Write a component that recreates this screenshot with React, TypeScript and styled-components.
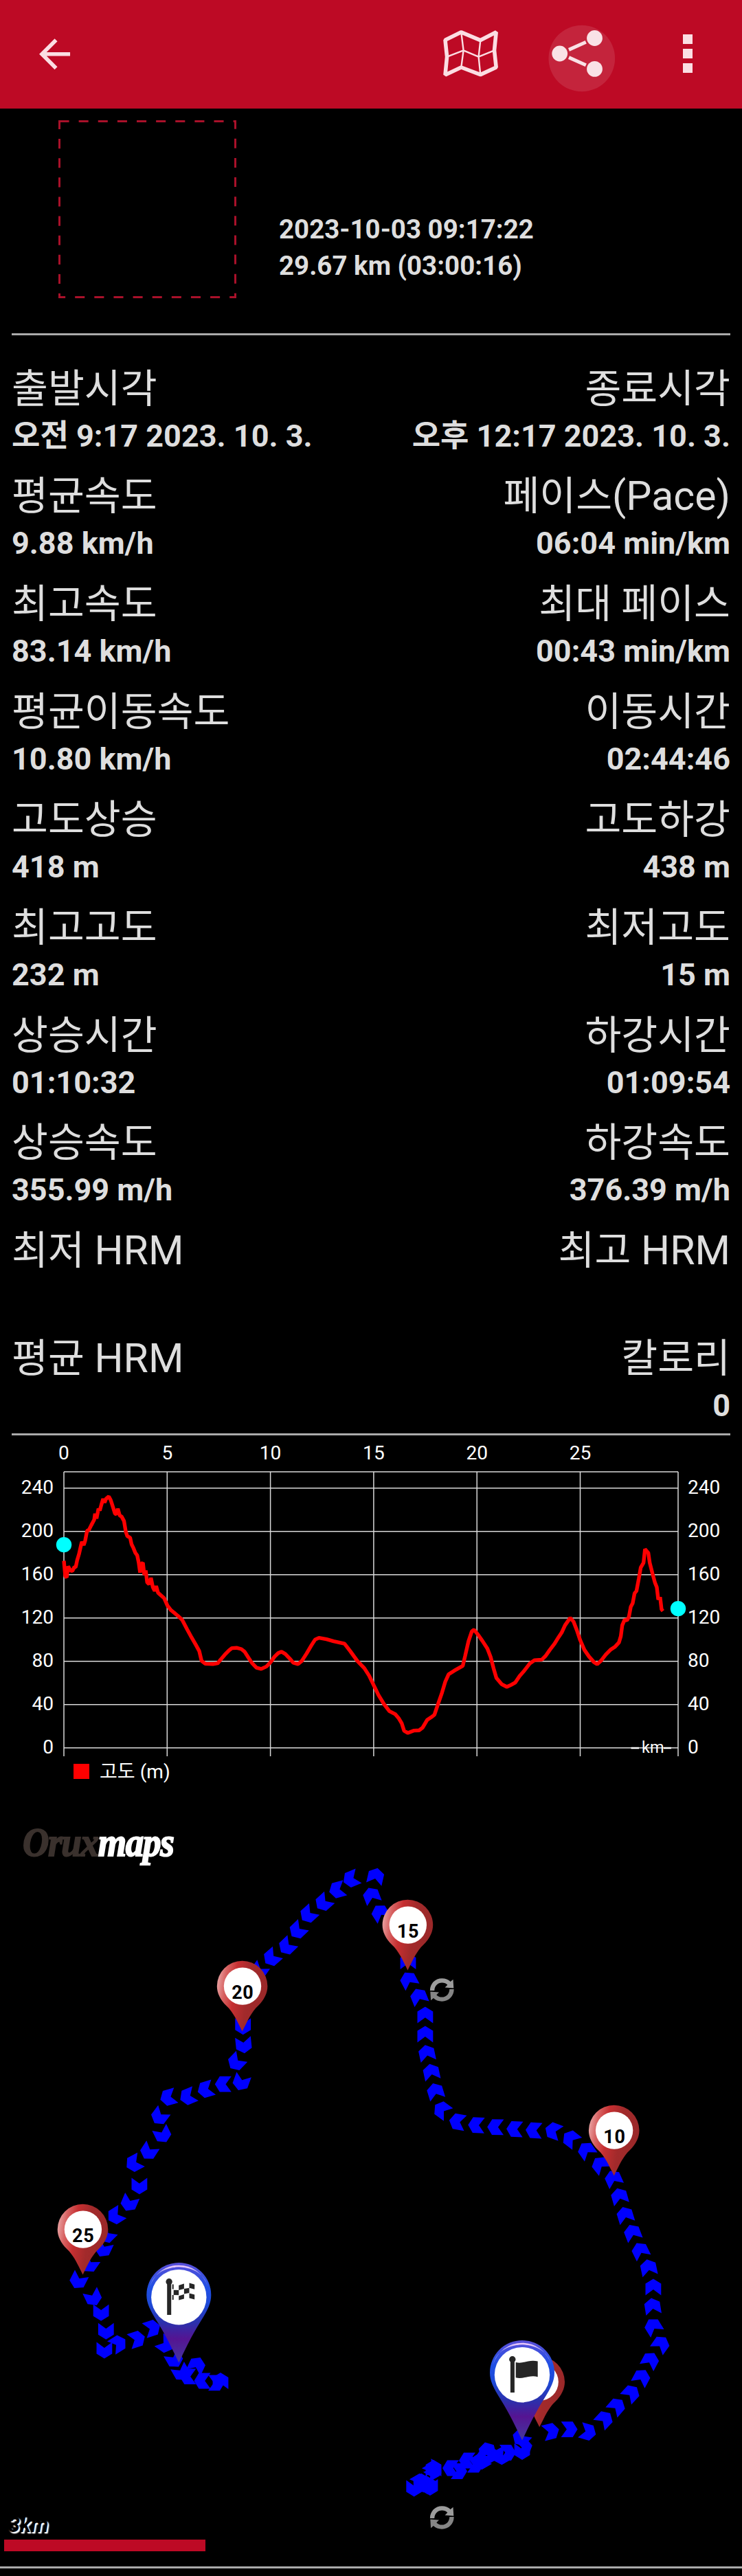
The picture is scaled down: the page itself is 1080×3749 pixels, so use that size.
import React from "react";
import styled, { createGlobalStyle } from "styled-components";

const GlobalStyle = createGlobalStyle`
  html, body { margin: 0; padding: 0; background: #000; }
  * { box-sizing: border-box; }
`;

const CRIMSON = "#bd0a25";
const ICON = "#fbdee3";
const FONT = `Roboto, "Noto Sans CJK KR", sans-serif`;

const Page = styled.main`
  display: flex;
  flex-direction: column;
  width: 1080px;
  height: 3749px;
  overflow: hidden;
  background: #000;
  color: #dedede;
  font-family: ${FONT};
`;

const Toolbar = styled.header`
  display: flex;
  align-items: center;
  flex: none;
  height: 158px;
  padding: 0 71px 0 46px;
  background: ${CRIMSON};
`;

const Action = styled.button<{ $w: number; $gap?: number; $push?: boolean }>`
  flex: none;
  width: ${(p) => p.$w}px;
  height: 158px;
  margin: 0 0 0 ${(p) => (p.$push ? "auto" : `${p.$gap ?? 0}px`)};
  padding: 0;
  border: 0;
  background: none;
  svg {
    display: block;
  }
`;

const Divider = styled.hr<{ $full?: boolean }>`
  flex: none;
  height: 3px;
  margin: 0 ${(p) => (p.$full ? 0 : 17)}px;
  border: 0;
  background: #aaaaaa;
`;

const Summary = styled.section`
  display: flex;
  align-items: flex-end;
  flex: none;
  height: 327px;
  padding: 0 85px 51px;
`;

const SummaryText = styled.div`
  display: flex;
  flex-direction: column;
  margin-left: 61px;
  padding-bottom: 21px;
  font-size: 38.5px;
  font-weight: 700;
  line-height: 53px;
  white-space: nowrap;
`;

const Stats = styled.section`
  display: grid;
  grid-auto-rows: 156.85px;
  flex: none;
  height: 1598px;
  padding: 38.5px 17px 0;
`;

const StatRow = styled.div`
  display: flex;
  justify-content: space-between;
`;

const Stat = styled.div<{ $end?: boolean }>`
  display: flex;
  flex-direction: column;
  align-items: ${(p) => (p.$end ? "flex-end" : "flex-start")};
  white-space: nowrap;
`;

const StatLabel = styled.span`
  height: 80px;
  font-size: 57.5px;
  line-height: 80px;
`;

const Latin = styled.span`
  font-size: 59px;
  line-height: 1;
`;

const StatValue = styled.span`
  height: 56px;
  font-size: 45px;
  font-weight: 700;
  line-height: 56px;
`;

const ChartPanel = styled.section`
  flex: none;
  height: 536px;
  svg {
    display: block;
  }
  text {
    font-family: ${FONT};
    font-size: 28.1px;
    fill: #fff;
  }
`;

const MapPanel = styled.section`
  position: relative;
  flex: none;
  height: 1110px;
  svg {
    display: block;
  }
`;

const Logo = styled.div`
  position: absolute;
  left: 33px;
  top: 26px;
  font-family: "Liberation Serif", serif;
  font-size: 60px;
  font-style: italic;
  font-weight: 700;
  line-height: 60px;
  letter-spacing: -1.5px;
  color: #3a312d;
  -webkit-text-stroke: 2px #3a312d;
  transform: scaleX(0.885);
  transform-origin: left;
  white-space: nowrap;
  b {
    color: #fff;
    -webkit-text-stroke: 2px #fff;
  }
`;

const Scale = styled.div`
  position: absolute;
  left: 6px;
  top: 1030px;
  display: flex;
  flex-direction: column;
  gap: 1px;
`;

const ScaleText = styled.span`
  padding-left: 6px;
  font-size: 30.5px;
  font-style: italic;
  font-weight: 700;
  line-height: 40px;
  color: #000;
  text-shadow: 2px 2px 2px #fff, 2px 2px 1px #ddd;
`;

const ScaleBar = styled.span`
  width: 293px;
  height: 17px;
  background: ${CRIMSON};
`;

const STATS: [string, string, string, string][] = [
  ["출발시각", "오전 9:17 2023. 10. 3.", "종료시각", "오후 12:17 2023. 10. 3."],
  ["평균속도", "9.88 km/h", "페이스(Pace)", "06:04 min/km"],
  ["최고속도", "83.14 km/h", "최대 페이스", "00:43 min/km"],
  ["평균이동속도", "10.80 km/h", "이동시간", "02:44:46"],
  ["고도상승", "418 m", "고도하강", "438 m"],
  ["최고고도", "232 m", "최저고도", "15 m"],
  ["상승시간", "01:10:32", "하강시간", "01:09:54"],
  ["상승속도", "355.99 m/h", "하강속도", "376.39 m/h"],
  ["최저 HRM", "", "최고 HRM", ""],
  ["평균 HRM", "", "칼로리", "0"],
];

/* Latin parts of a label are set slightly larger than the Hangul. */
function Label({ text }: { text: string }) {
  const at = text.search(/ ?[(A-Z]/);
  if (at < 0) return <StatLabel>{text}</StatLabel>;
  return (
    <StatLabel>
      {text.slice(0, at)}
      <Latin>{text.slice(at)}</Latin>
    </StatLabel>
  );
}

const PROFILE =
  "135,592 138,655 141,660 144,615 149,632 153,634 157,618 160,618 163,590 167,565 171,530 173,515 177,528 180,510 184,470 188,466 193,447 199,425 201,400 204,420 206,400 208,380 211,387 214,365 218,340 221,355 224,340 230,330 234,345 239,375 243,400 246,402 249,380 253,408 257,412 262,430 266,475 269,492 275,498 278,525 282,540 286,560 290,570 293,598 296,640 299,605 302,600 305,650 308,632 311,680 315,688 319,662 323,700 327,715 330,695 334,722 340,733 347,745 354,775 361,793 370,807 378,820 385,833 395,870 405,905 414,935 421,960 426,1000 434,1012 450,1013 460,1010 466,995 475,975 484,957 490,948 500,947 510,952 517,963 525,987 533,1010 542,1028 552,1033 563,1023 572,1005 580,983 588,968 595,963 603,972 612,990 620,1008 630,1013 638,1000 648,970 658,937 666,913 674,906 690,912 705,920 728,930 740,960 755,1000 770,1030 780,1060 790,1100 800,1140 812,1178 823,1205 835,1217 843,1235 849,1255 854,1285 862,1294 875,1284 886,1283 893,1272 903,1240 911,1230 918,1220 925,1180 934,1130 941,1085 948,1055 960,1040 978,1020 983,980 990,920 997,880 1002,873 1010,893 1020,920 1030,950 1037,985 1043,1030 1049,1070 1060,1095 1071,1106 1080,1098 1089,1088 1098,1062 1108,1040 1120,1010 1130,997 1145,995 1153,980 1162,955 1172,930 1180,905 1187,885 1194,855 1205,825 1212,840 1219,875 1226,915 1235,955 1245,983 1255,1005 1262,1014 1270,1000 1280,975 1290,955 1300,942 1308,925 1312,900 1315,855 1320,832 1325,835 1329,820 1333,780 1337,765 1341,725 1345,715 1350,665 1354,620 1360,600 1363,545 1370,560 1373,600 1379,645 1384,680 1388,700 1391,750 1395,740 1398,790 1401,797";

const toX = (v: number) => v / 1.4519;
const toY = (v: number) => v / 2.8 - 29;
const profilePoints = PROFILE.split(" ")
  .map((p) => p.split(",").map(Number))
  .map(([x, y]) => `${toX(x).toFixed(1)},${toY(y).toFixed(1)}`)
  .join(" ");

function Chart() {
  const xs = [0, 5, 10, 15, 20, 25];
  const ys = [240, 200, 160, 120, 80, 40, 0];
  const gx = (km: number) => 93 + km * 30.06;
  const gy = (m: number) => 454.7 - m * 1.575;
  return (
    <ChartPanel>
      <svg width="1080" height="536" viewBox="0 0 1080 536">
        <g stroke="#fff" strokeWidth="1.5" opacity="0.85">
          {xs.map((k) => (
            <line key={k} x1={gx(k)} x2={gx(k)} y1="53" y2="467" />
          ))}
          <line x1="987" x2="987" y1="53" y2="467" />
          <line x1="93" x2="987" y1="53" y2="53" />
          {ys.map((m) => (
            <line key={m} x1="93" x2="987" y1={gy(m)} y2={gy(m)} />
          ))}
        </g>
        {xs.map((k) => (
          <text key={k} x={gx(k)} y="35" textAnchor="middle">
            {k}
          </text>
        ))}
        {ys.map((m) => (
          <React.Fragment key={m}>
            <text x="78" y={gy(m) + 8.3} textAnchor="end">
              {m}
            </text>
            <text x="1001" y={gy(m) + 8.3}>
              {m}
            </text>
          </React.Fragment>
        ))}
        <path d="M918.5,455 H930 M966,455 H977" stroke="#fff" strokeWidth="2.4" />
        <text x="934" y="462" style={{ fontSize: 23.5 }}>
          km
        </text>
        <polyline points={profilePoints} fill="none" stroke="#f00" strokeWidth="5.4" strokeLinejoin="bevel" />
        <circle cx="93" cy="159.2" r="11.2" fill="#0ff" />
        <circle cx="987" cy="252.2" r="11.2" fill="#0ff" />
        <rect x="107" y="478" width="23" height="22" fill="#f00" />
        <text x="145" y="499">
          고도 (m)
        </text>
      </svg>
    </ChartPanel>
  );
}

/* Direction arrows along the track: x, y, heading in degrees. */
const ARROWS: [number, number, number][] = [
  [511, 2734.6, 247], [490.8, 2750.4, 255], [470.8, 2769.3, 228], [448.7, 2786.4, 228], [433.2, 2809.6, 226],
  [417.7, 2832.8, 226], [395.4, 2849.3, 229], [376.8, 2868.6, 215], [353.7, 2949.3, 180], [354.7, 2976.4, 174],
  [343.7, 3001.4, 224], [351, 3030.7, 200], [324.8, 3033.2, 270], [299.3, 3041, 253], [273.4, 3051.4, 247],
  [244.9, 3052.5, 254], [232.1, 3080.3, 217], [236.9, 3106.8, 154], [216.3, 3131.4, 213], [194.9, 3148.5, 242],
  [202.9, 3181.4, 180], [188, 3206.5, 203], [168.1, 3225, 238], [155, 3252.6, 225], [150.2, 3273, 205],
  [130, 3295.4, 215], [113.7, 3319.4, 207], [135.7, 3344, 155], [147.1, 3365.8, 180], [154.3, 3392.7, 180],
  [151.9, 3420.6, 180], [172.2, 3410.8, 58], [199.4, 3404.3, 72], [221.5, 3388.3, 72], [241, 3412, 125],
  [254, 3434, 150], [264, 3453, 150], [273.4, 3458.7, 270], [286.5, 3442, 25], [294.5, 3465, 270],
  [321, 3465, 0], [315, 3467.8, 90],
  [546.9, 2730.4, 13], [540.7, 2758.6, 339], [553, 2783.6, 328], [594.8, 2881.4, 332], [594, 2853.9, 0],
  [609.6, 2905.7, 338], [618.9, 2932.5, 0], [618.9, 2960.4, 0], [621.3, 2987.9, 348], [627.8, 3015.4, 348],
  [633.7, 3043.6, 343], [643, 3070.4, 306], [665.7, 3087.9, 280], [693.3, 3092.9, 272], [721.2, 3095.7, 271],
  [749.1, 3098.6, 272], [777, 3100.4, 273], [805.2, 3101, 290], [830.7, 3112.5, 308], [853.4, 3129.3, 325],
  [873.5, 3150.4, 322], [892.7, 3170.5, 336], [901.6, 3196.3, 344], [909.9, 3223.5, 343], [920.6, 3249.3, 339],
  [931.9, 3275.4, 334], [944, 3300.1, 348], [950.9, 3328.4, 0], [949.8, 3356.4, 351], [950.5, 3385.8, 328],
  [962.2, 3411.5, 35], [946.7, 3435.1, 28], [934, 3459.8, 28], [918.8, 3483, 43], [897.8, 3501.9, 41],
  [879.9, 3520.8, 43], [855.8, 3539.6, 106], [828.6, 3535.6, 90], [802, 3538.5, 76],
  [758, 3548, 225], [763, 3561, 80], [760, 3568, 180], [739, 3569.5, 90], [729, 3575, 240],
  [709, 3566, 345], [705, 3577, 215], [713, 3572, 60], [680, 3581, 270], [692, 3587, 90], [700, 3582, 240],
  [656, 3592, 270], [668, 3596.5, 90], [631, 3592, 0], [630, 3596, 60], [632, 3594, 120],
  [612, 3612, 300], [612, 3612, 60], [626, 3620, 180], [624, 3618, 120], [602.7, 3621.5, 180],
];

const RED_PIN =
  "M0,65.8 C-8,50 -13,38 -23,28.7 C-32,20 -36.8,10 -36.8,0 A36.8,36.8 0 0 1 36.8,0 C36.8,10 32,20 23,28.7 C13,38 8,50 0,65.8Z";
const BLUE_PIN =
  "M0,98.6 C-8,82 -17,62 -32,38 C-42,22 -47,12 -47,0 A47,47 0 0 1 47,0 C47,12 42,22 32,38 C17,62 8,82 0,98.6Z";

function RedPin({ x, y, label }: { x: number; y: number; label?: string }) {
  return (
    <g transform={`translate(${x},${y})`}>
      <path d={RED_PIN} fill="url(#redPin)" />
      <circle cx="0.4" cy="0" r="27.2" fill="#fff" />
      {label && (
        <text x="0.7" y="18" textAnchor="middle" fontFamily="Roboto, sans-serif" fontSize="27" fontWeight="700" letterSpacing="0.6">
          {label}
        </text>
      )}
    </g>
  );
}

function BluePin({ x, y, children }: { x: number; y: number; children: React.ReactNode }) {
  return (
    <g transform={`translate(${x},${y})`}>
      <path d={BLUE_PIN} fill="url(#bluePin)" />
      <path d="M-42,-12 A43.8,43.8 0 0 1 42,-12 C34,-50 -34,-50 -42,-12Z" fill="url(#pinShine)" />
      <circle cy="1" r="41.5" fill="url(#bluePin)" />
      <circle cy="3.2" r="40.2" fill="#fff" />
      <g fill="#262626">
        <circle cx="-14.2" cy="-19.3" r="4.7" />
        <rect x="-17.1" y="-18" width="6" height="47" />
        {children}
      </g>
    </g>
  );
}

function Sync({ x, y }: { x: number; y: number }) {
  const half = "M-17.4,1 C-17.4,-9 -10,-16.7 0,-16.7 C5,-16.7 9.5,-14.8 12.4,-12 L16.2,-15.3 L17,-2.4 L4.3,-3.6 L8,-7.2 C6,-9.6 3.4,-10.6 0,-10.6 C-6,-10.6 -10.8,-6 -11,1Z";
  return (
    <g transform={`translate(${x},${y})`}>
      <path d={half} fill="#9c9c9c" />
      <path d={half} fill="#858585" transform="rotate(180)" />
    </g>
  );
}

function TrackMap() {
  return (
    <MapPanel>
      <svg width="1080" height="1110" viewBox="0 2625 1080 1110">
        <defs>
          <linearGradient id="redPin" x1="0" y1="0.25" x2="1" y2="0.45">
            <stop offset="0" stopColor="#eaa6a6" />
            <stop offset="0.16" stopColor="#d86464" />
            <stop offset="0.36" stopColor="#c62f31" />
            <stop offset="0.62" stopColor="#a22a2b" />
            <stop offset="1" stopColor="#9a2829" />
          </linearGradient>
          <linearGradient id="bluePin" gradientUnits="userSpaceOnUse" x1="0" y1="-47" x2="0" y2="99">
            <stop offset="0" stopColor="#5a4fd8" />
            <stop offset="0.25" stopColor="#1f4fe4" />
            <stop offset="0.42" stopColor="#1d49d6" />
            <stop offset="0.6" stopColor="#2b30ac" />
            <stop offset="0.76" stopColor="#551492" />
            <stop offset="1" stopColor="#43399f" />
          </linearGradient>
          <linearGradient id="pinShine" gradientUnits="userSpaceOnUse" x1="0" y1="-45" x2="0" y2="-14">
            <stop offset="0" stopColor="#f6cdfb" />
            <stop offset="1" stopColor="#5f86ef" />
          </linearGradient>
        </defs>
        <g fill="#00f">
          {ARROWS.map(([x, y, a], i) => (
            <path
              key={i}
              d="M0,-12 L11.4,-5 L11.4,12 L0,3.7 L-11.4,12 L-11.4,-5Z"
              transform={`translate(${x},${y}) rotate(${a})`}
            />
          ))}
        </g>
        <RedPin x={593.4} y={2801.6} label="15" />
        <RedPin x={352.6} y={2890.6} label="20" />
        <RedPin x={893.7} y={3100.6} label="10" />
        <RedPin x={120.5} y={3244.6} label="25" />
        <RedPin x={785.2} y={3466.5} />
        <BluePin x={260.3} y={3340}>
          <path d="M-9.6,-15.5h2v7h-2z M-9.6,0h2v7h-2z M-7.6,-7.2L-0.1,-6.9V0.3L-7.6,0z M-0.1,-14L7.6,-16.4V-9L-0.1,-6.9z M-0.1,1.4L7.6,-1V5.6L-0.1,7.6z M7.6,-9L15.2,-10.3V-3L7.6,-1.5z M15.2,-17.6L22.9,-15.3V-8.2L15.2,-10.3z M15.2,-2.6L22.9,-0.6V6.6L15.2,4.6z" />
        </BluePin>
        <BluePin x={760} y={3453}>
          <path d="M-9.3,-15 C2,-12 10,-20 22.7,-16.4 V6.3 C12,2.5 2,10 -9.3,7.3Z" />
        </BluePin>
        <Sync x={643.3} y={2896} />
        <Sync x={643.3} y={3664} />
      </svg>
      <Logo>
        Orux<b>maps</b>
      </Logo>
      <Scale>
        <ScaleText>3km</ScaleText>
        <ScaleBar />
      </Scale>
    </MapPanel>
  );
}

export default function App() {
  return (
    <Page>
      <GlobalStyle />
      <Toolbar>
        <Action $w={68} aria-label="Back">
          <svg width="68" height="158" viewBox="0 0 68 158">
            <path
              transform="translate(-0.2,45) scale(2.8125)"
              d="M20 11H7.83l5.59-5.59L12 4l-8 8 8 8 1.41-1.41L7.83 13H20v-2z"
              fill={ICON}
            />
          </svg>
        </Action>
        <Action $w={80} $push aria-label="Map">
          <svg width="80" height="158" viewBox="645 0 80 158" fill="none" stroke={ICON} strokeLinejoin="bevel">
            <path
              strokeWidth="5.6"
              d="M648,58.2 L671.3,46.8 L699.3,58.6 L722.2,46.8 L719.5,73.3 L722.2,98 L699.3,108.6 L671.3,98 L648,109 L650.6,82.6Z"
            />
            <path strokeWidth="2.4" d="M671.3,46.8 L674.6,73.3 L671.3,98 M699.3,58.6 L696.6,82.6 L699.3,108.6 M650.6,82.6 L674.6,73.3 L696.6,82.6 L719.5,73.3" />
          </svg>
        </Action>
        <Action $w={98} $gap={73} aria-label="Share">
          <svg width="98" height="158" viewBox="798 0 98 158" fill="#f9e2e6">
            <circle cx="846.8" cy="85" r="48.3" fill="#fff" fillOpacity="0.11" />
            <circle cx="814.7" cy="78" r="11.4" />
            <circle cx="865.5" cy="55.5" r="11.4" />
            <circle cx="865.5" cy="100.4" r="11.4" />
            <path d="M828,72.4 L852.8,61.2 M828,83.6 L852.8,94.8" stroke="#f9e2e6" strokeWidth="5" />
          </svg>
        </Action>
        <Action $w={16} $gap={97} aria-label="More">
          <svg width="16" height="158" viewBox="0 0 16 158" fill={ICON}>
            <rect x="1" y="50" width="14" height="14" />
            <rect x="1" y="71" width="14" height="14" />
            <rect x="1" y="92" width="14" height="14" />
          </svg>
        </Action>
      </Toolbar>
      <Summary>
        <svg width="260" height="260" viewBox="0 0 260 260">
          <path d="M1.5,2.5 H257.5 V258.5 H1.5Z" fill="none" stroke="#a9112a" strokeWidth="3" strokeDasharray="14.0625 14.0625" />
        </svg>
        <SummaryText>
          <span>2023-10-03 09:17:22</span>
          <span>29.67 km (03:00:16)</span>
        </SummaryText>
      </Summary>
      <Divider />
      <Stats>
        {STATS.map(([a, av, b, bv]) => (
          <StatRow key={a}>
            <Stat>
              <Label text={a} />
              <StatValue>{av}</StatValue>
            </Stat>
            <Stat $end>
              <Label text={b} />
              <StatValue>{bv}</StatValue>
            </Stat>
          </StatRow>
        ))}
      </Stats>
      <Divider />
      <Chart />
      <TrackMap />
      <Divider $full />
    </Page>
  );
}
